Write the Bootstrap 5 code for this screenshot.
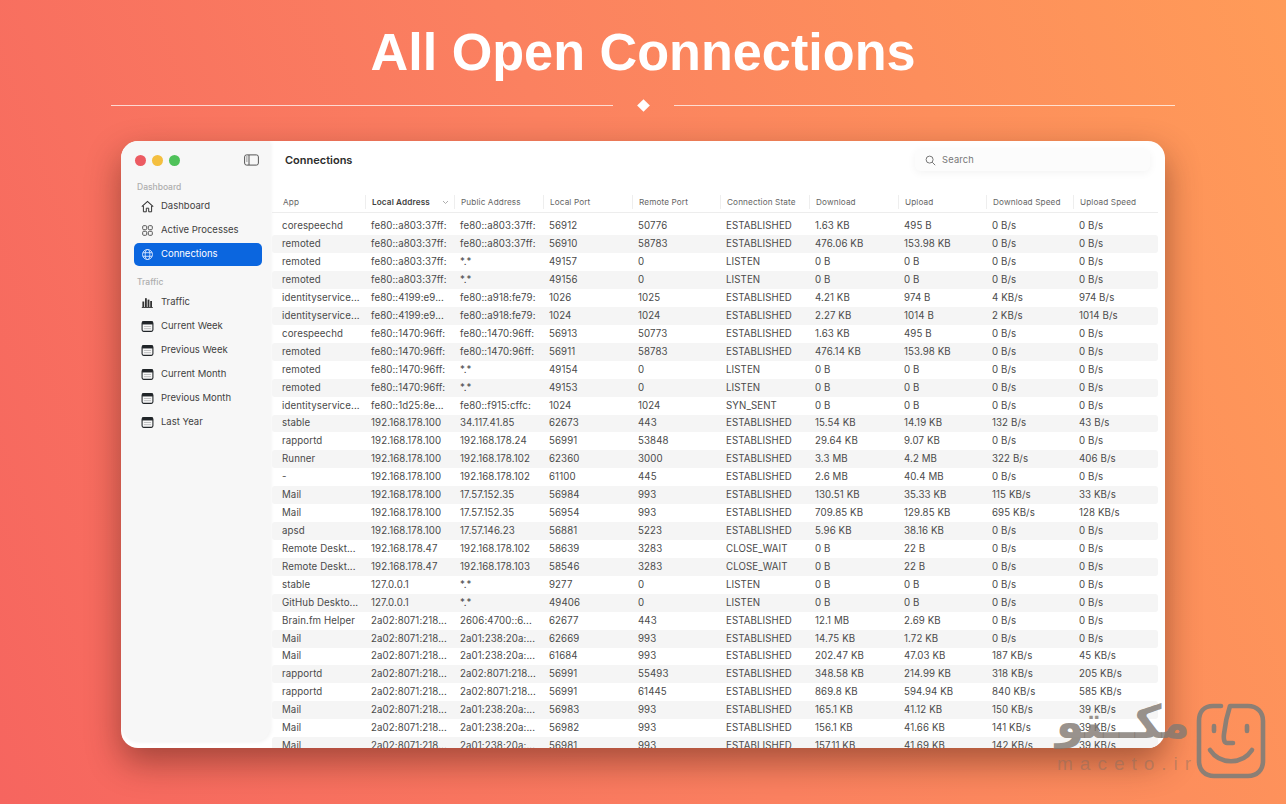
<!DOCTYPE html>
<html lang="en">
<head>
<meta charset="utf-8">
<title>All Open Connections</title>
<link href="https://cdn.jsdelivr.net/npm/bootstrap@5.3.0/dist/css/bootstrap.min.css" rel="stylesheet">
<style>
html,body{height:804px;overflow:hidden}
body{position:relative;background:linear-gradient(70deg,#f6655f 0%,#fb8160 50%,#ff9b58 100%);font-family:Inter,"Liberation Sans",sans-serif;color:#3d3d3d}
.hero-title{font-family:"Liberation Sans",Arial,sans-serif;font-weight:700;font-size:52.2px;line-height:62px;color:#fff;margin:0;padding-top:21px;text-align:center}
.hero-rule{height:12px;margin:16px 111px 0;gap:21px}
.hero-rule i{display:block;flex:1;height:1px;background:rgba(255,255,255,.72)}
.hero-rule b{display:block;width:9px;height:9px;background:#fff;transform:rotate(45deg);margin:0 5px}
.app-win{width:1044px;height:607px;margin:30px auto 0;background:#fff;border-radius:17px;box-shadow:0 14px 34px rgba(60,20,10,.45);overflow:hidden;font-size:10px}
.side-pane{width:149px;height:600px;flex:none;background:#f7f7f7;border-radius:17px 0 14px 17px;padding:0 8px 0 13px;box-shadow:1px 1px 4px rgba(0,0,0,.06)}
.lights{height:38px;gap:6px;padding-left:1px}
.lights span{width:11px;height:11px;border-radius:50%}
.l-r{background:#ec5b62}.l-y{background:#f4bf3f}.l-g{background:#4fc25a}
.toggle-ic{margin-left:auto;margin-right:3px}
.side-label{font-size:8.5px;line-height:12px;color:#aeaeae;font-weight:500;padding-left:3px;margin-top:2px}
.side-label.second{margin-top:9px}
.side-list{margin-top:2px}
.side-list.second{margin-top:3px}
.side-item{height:23px;display:flex;align-items:center;gap:7px;padding-left:7px;border-radius:5px;color:#3f3f3f;font-size:9.5px;margin-bottom:1px}
.side-item svg{flex:none}
.side-item.on{background:#0b66df;color:#fff}
.main-pane{flex:1;min-width:0;height:607px;overflow:hidden;position:relative}
.top-line{height:38px;padding-left:15px;padding-right:15px}
.top-name{font-size:11px;font-weight:600;color:#2c2c2c}
.find-box{width:235px;height:22px;margin-left:auto;background:#fcfcfc;border-radius:6px;box-shadow:0 2px 8px rgba(0,0,0,.05);display:flex;align-items:center;gap:6px;padding-left:10px;color:#777;font-size:9.3px;letter-spacing:.2px}
.conn-cols{display:grid;grid-template-columns:89px 89px 89px 89px 88px 89px 89px 88px 87px 79px;margin:0 7px 0 2px}
.conn-head{margin-top:15px;height:19px;align-items:center;font-size:8.2px;color:#666;border-bottom:1px solid #ededed;padding:0 0 3px 4px;letter-spacing:.12px;grid-template-columns:89px 89px 89px 89px 88px 89px 89px 88px 87px 75px}
.conn-head span{padding-left:6px;border-left:1px solid #eee;line-height:14px;position:relative;white-space:nowrap}
.conn-head span:first-child{border-left:0;padding-left:7px}
.conn-head .sorted{font-weight:600;color:#3f3f3f}
.conn-head .caret-mark{position:absolute;left:76px;top:5px}
.conn-body{padding-top:4.4px}
.conn-row{height:17.93px;align-items:center;border-radius:3px;font-size:9.7px;line-height:12px;color:#4a4a4a;letter-spacing:.1px}
.conn-row:nth-child(even){background:#f5f5f5}
.conn-row span{padding-left:10px;white-space:nowrap}
.wm-face{position:absolute;left:1196px;top:703px}
.wm-fa{position:absolute;right:96px;top:692px;font:700 46px/60px "DejaVu Sans",sans-serif;color:rgba(130,122,115,.82);direction:rtl}
.wm-lat{position:absolute;left:1057px;top:754px;font:400 19px/20px "Liberation Sans",sans-serif;letter-spacing:7px;color:rgba(125,110,100,.42)}
</style>
</head>
<body>
<svg width="0" height="0" class="position-absolute">
<symbol id="i-cal" viewBox="0 0 12 12"><rect x="1" y="1.5" width="10" height="9" rx="1.4" fill="none" stroke="currentColor"/><rect x="1" y="1.5" width="10" height="2.6" fill="currentColor"/><path d="M2.7 6h6.6M2.7 8h6.6" stroke="currentColor" stroke-width=".6" opacity=".4"/></symbol>
</svg>

<h1 class="hero-title">All Open Connections</h1>
<div class="hero-rule d-flex align-items-center"><i></i><b></b><i></i></div>

<div class="app-win d-flex">
  <aside class="side-pane">
    <div class="lights d-flex align-items-center">
      <span class="l-r"></span><span class="l-y"></span><span class="l-g"></span>
      <svg class="toggle-ic" width="15" height="12" viewBox="0 0 15 12"><rect x=".6" y=".9" width="13.8" height="10.2" rx="2" fill="none" stroke="#555" stroke-width="1"/><path d="M5 1v10" stroke="#555"/><path d="M2 3h1.6M2 5h1.6M2 7h1.6" stroke="#555" stroke-width=".7"/></svg>
    </div>
    <div class="side-label">Dashboard</div>
    <div class="side-list d-flex flex-column">
      <div class="side-item"><svg width="13" height="13" viewBox="0 0 13 13"><path d="M.8 6.6 6.5 1.4l5.7 5.2" fill="none" stroke="#333" stroke-width="1.1"/><path d="M2.4 6v5.8h2.9V8.2h2.4v3.6h2.9V6" fill="none" stroke="#333" stroke-width="1"/></svg>Dashboard</div>
      <div class="side-item"><svg width="13" height="13" viewBox="0 0 13 13" fill="none" stroke="#555"><rect x="1.7" y="1.7" width="4" height="4" rx="1"/><rect x="7.3" y="1.7" width="4" height="4" rx="1"/><rect x="1.7" y="7.3" width="4" height="4" rx="1"/><rect x="7.3" y="7.3" width="4" height="4" rx="1"/></svg>Active Processes</div>
      <div class="side-item on"><svg width="13" height="13" viewBox="0 0 13 13" fill="none" stroke="#dce9ff" stroke-width=".9"><circle cx="6.5" cy="6.5" r="5"/><ellipse cx="6.5" cy="6.5" rx="2.3" ry="5"/><path d="M1.9 4.7h9.2M1.9 8.3h9.2"/></svg>Connections</div>
    </div>
    <div class="side-label second">Traffic</div>
    <div class="side-list second d-flex flex-column">
      <div class="side-item"><svg width="13" height="13" viewBox="0 0 13 13" fill="#333"><rect x="1.4" y="5.5" width="1.8" height="5.5"/><rect x="4" y="2.2" width="1.8" height="8.8"/><rect x="6.6" y="3.6" width="1.8" height="7.4"/><rect x="9.2" y="5" width="1.8" height="6"/><rect x=".8" y="11" width="11" height=".9"/></svg>Traffic</div>
      <div class="side-item"><svg width="13" height="13" class="text-dark"><use href="#i-cal"/></svg>Current Week</div>
      <div class="side-item"><svg width="13" height="13" class="text-dark"><use href="#i-cal"/></svg>Previous Week</div>
      <div class="side-item"><svg width="13" height="13" class="text-dark"><use href="#i-cal"/></svg>Current Month</div>
      <div class="side-item"><svg width="13" height="13" class="text-dark"><use href="#i-cal"/></svg>Previous Month</div>
      <div class="side-item"><svg width="13" height="13" class="text-dark"><use href="#i-cal"/></svg>Last Year</div>
    </div>
  </aside>
  <main class="main-pane">
    <div class="top-line d-flex align-items-center">
      <div class="top-name">Connections</div>
      <div class="find-box"><svg width="11" height="11" viewBox="0 0 11 11" fill="none" stroke="#777"><circle cx="4.6" cy="4.6" r="3.5"/><path d="m7.2 7.2 3 3"/></svg>Search</div>
    </div>
    <div class="conn-cols conn-head">
      <span>App</span><span class="sorted">Local Address<svg class="caret-mark" width="7" height="5" viewBox="0 0 7 5" fill="none" stroke="#999" stroke-width=".8"><path d="m1 1 2.5 2.5L6 1"/></svg></span><span>Public Address</span><span>Local Port</span><span>Remote Port</span><span>Connection State</span><span>Download</span><span>Upload</span><span>Download Speed</span><span>Upload Speed</span>
    </div>
    <div class="conn-body">
      <div class="conn-cols conn-row"><span>corespeechd</span><span>fe80::a803:37ff:</span><span>fe80::a803:37ff:</span><span>56912</span><span>50776</span><span>ESTABLISHED</span><span>1.63 KB</span><span>495 B</span><span>0 B/s</span><span>0 B/s</span></div>
      <div class="conn-cols conn-row"><span>remoted</span><span>fe80::a803:37ff:</span><span>fe80::a803:37ff:</span><span>56910</span><span>58783</span><span>ESTABLISHED</span><span>476.06 KB</span><span>153.98 KB</span><span>0 B/s</span><span>0 B/s</span></div>
      <div class="conn-cols conn-row"><span>remoted</span><span>fe80::a803:37ff:</span><span>*.*</span><span>49157</span><span>0</span><span>LISTEN</span><span>0 B</span><span>0 B</span><span>0 B/s</span><span>0 B/s</span></div>
      <div class="conn-cols conn-row"><span>remoted</span><span>fe80::a803:37ff:</span><span>*.*</span><span>49156</span><span>0</span><span>LISTEN</span><span>0 B</span><span>0 B</span><span>0 B/s</span><span>0 B/s</span></div>
      <div class="conn-cols conn-row"><span>identityservice...</span><span>fe80::4199:e9...</span><span>fe80::a918:fe79:</span><span>1026</span><span>1025</span><span>ESTABLISHED</span><span>4.21 KB</span><span>974 B</span><span>4 KB/s</span><span>974 B/s</span></div>
      <div class="conn-cols conn-row"><span>identityservice...</span><span>fe80::4199:e9...</span><span>fe80::a918:fe79:</span><span>1024</span><span>1024</span><span>ESTABLISHED</span><span>2.27 KB</span><span>1014 B</span><span>2 KB/s</span><span>1014 B/s</span></div>
      <div class="conn-cols conn-row"><span>corespeechd</span><span>fe80::1470:96ff:</span><span>fe80::1470:96ff:</span><span>56913</span><span>50773</span><span>ESTABLISHED</span><span>1.63 KB</span><span>495 B</span><span>0 B/s</span><span>0 B/s</span></div>
      <div class="conn-cols conn-row"><span>remoted</span><span>fe80::1470:96ff:</span><span>fe80::1470:96ff:</span><span>56911</span><span>58783</span><span>ESTABLISHED</span><span>476.14 KB</span><span>153.98 KB</span><span>0 B/s</span><span>0 B/s</span></div>
      <div class="conn-cols conn-row"><span>remoted</span><span>fe80::1470:96ff:</span><span>*.*</span><span>49154</span><span>0</span><span>LISTEN</span><span>0 B</span><span>0 B</span><span>0 B/s</span><span>0 B/s</span></div>
      <div class="conn-cols conn-row"><span>remoted</span><span>fe80::1470:96ff:</span><span>*.*</span><span>49153</span><span>0</span><span>LISTEN</span><span>0 B</span><span>0 B</span><span>0 B/s</span><span>0 B/s</span></div>
      <div class="conn-cols conn-row"><span>identityservice...</span><span>fe80::1d25:8e...</span><span>fe80::f915:cffc:</span><span>1024</span><span>1024</span><span>SYN_SENT</span><span>0 B</span><span>0 B</span><span>0 B/s</span><span>0 B/s</span></div>
      <div class="conn-cols conn-row"><span>stable</span><span>192.168.178.100</span><span>34.117.41.85</span><span>62673</span><span>443</span><span>ESTABLISHED</span><span>15.54 KB</span><span>14.19 KB</span><span>132 B/s</span><span>43 B/s</span></div>
      <div class="conn-cols conn-row"><span>rapportd</span><span>192.168.178.100</span><span>192.168.178.24</span><span>56991</span><span>53848</span><span>ESTABLISHED</span><span>29.64 KB</span><span>9.07 KB</span><span>0 B/s</span><span>0 B/s</span></div>
      <div class="conn-cols conn-row"><span>Runner</span><span>192.168.178.100</span><span>192.168.178.102</span><span>62360</span><span>3000</span><span>ESTABLISHED</span><span>3.3 MB</span><span>4.2 MB</span><span>322 B/s</span><span>406 B/s</span></div>
      <div class="conn-cols conn-row"><span>-</span><span>192.168.178.100</span><span>192.168.178.102</span><span>61100</span><span>445</span><span>ESTABLISHED</span><span>2.6 MB</span><span>40.4 MB</span><span>0 B/s</span><span>0 B/s</span></div>
      <div class="conn-cols conn-row"><span>Mail</span><span>192.168.178.100</span><span>17.57.152.35</span><span>56984</span><span>993</span><span>ESTABLISHED</span><span>130.51 KB</span><span>35.33 KB</span><span>115 KB/s</span><span>33 KB/s</span></div>
      <div class="conn-cols conn-row"><span>Mail</span><span>192.168.178.100</span><span>17.57.152.35</span><span>56954</span><span>993</span><span>ESTABLISHED</span><span>709.85 KB</span><span>129.85 KB</span><span>695 KB/s</span><span>128 KB/s</span></div>
      <div class="conn-cols conn-row"><span>apsd</span><span>192.168.178.100</span><span>17.57.146.23</span><span>56881</span><span>5223</span><span>ESTABLISHED</span><span>5.96 KB</span><span>38.16 KB</span><span>0 B/s</span><span>0 B/s</span></div>
      <div class="conn-cols conn-row"><span>Remote Deskt...</span><span>192.168.178.47</span><span>192.168.178.102</span><span>58639</span><span>3283</span><span>CLOSE_WAIT</span><span>0 B</span><span>22 B</span><span>0 B/s</span><span>0 B/s</span></div>
      <div class="conn-cols conn-row"><span>Remote Deskt...</span><span>192.168.178.47</span><span>192.168.178.103</span><span>58546</span><span>3283</span><span>CLOSE_WAIT</span><span>0 B</span><span>22 B</span><span>0 B/s</span><span>0 B/s</span></div>
      <div class="conn-cols conn-row"><span>stable</span><span>127.0.0.1</span><span>*.*</span><span>9277</span><span>0</span><span>LISTEN</span><span>0 B</span><span>0 B</span><span>0 B/s</span><span>0 B/s</span></div>
      <div class="conn-cols conn-row"><span>GitHub Deskto...</span><span>127.0.0.1</span><span>*.*</span><span>49406</span><span>0</span><span>LISTEN</span><span>0 B</span><span>0 B</span><span>0 B/s</span><span>0 B/s</span></div>
      <div class="conn-cols conn-row"><span>Brain.fm Helper</span><span>2a02:8071:218...</span><span>2606:4700::6...</span><span>62677</span><span>443</span><span>ESTABLISHED</span><span>12.1 MB</span><span>2.69 KB</span><span>0 B/s</span><span>0 B/s</span></div>
      <div class="conn-cols conn-row"><span>Mail</span><span>2a02:8071:218...</span><span>2a01:238:20a:...</span><span>62669</span><span>993</span><span>ESTABLISHED</span><span>14.75 KB</span><span>1.72 KB</span><span>0 B/s</span><span>0 B/s</span></div>
      <div class="conn-cols conn-row"><span>Mail</span><span>2a02:8071:218...</span><span>2a01:238:20a:...</span><span>61684</span><span>993</span><span>ESTABLISHED</span><span>202.47 KB</span><span>47.03 KB</span><span>187 KB/s</span><span>45 KB/s</span></div>
      <div class="conn-cols conn-row"><span>rapportd</span><span>2a02:8071:218...</span><span>2a02:8071:218...</span><span>56991</span><span>55493</span><span>ESTABLISHED</span><span>348.58 KB</span><span>214.99 KB</span><span>318 KB/s</span><span>205 KB/s</span></div>
      <div class="conn-cols conn-row"><span>rapportd</span><span>2a02:8071:218...</span><span>2a02:8071:218...</span><span>56991</span><span>61445</span><span>ESTABLISHED</span><span>869.8 KB</span><span>594.94 KB</span><span>840 KB/s</span><span>585 KB/s</span></div>
      <div class="conn-cols conn-row"><span>Mail</span><span>2a02:8071:218...</span><span>2a01:238:20a:...</span><span>56983</span><span>993</span><span>ESTABLISHED</span><span>165.1 KB</span><span>41.12 KB</span><span>150 KB/s</span><span>39 KB/s</span></div>
      <div class="conn-cols conn-row"><span>Mail</span><span>2a02:8071:218...</span><span>2a01:238:20a:...</span><span>56982</span><span>993</span><span>ESTABLISHED</span><span>156.1 KB</span><span>41.66 KB</span><span>141 KB/s</span><span>39 KB/s</span></div>
      <div class="conn-cols conn-row"><span>Mail</span><span>2a02:8071:218...</span><span>2a01:238:20a:...</span><span>56981</span><span>993</span><span>ESTABLISHED</span><span>157.11 KB</span><span>41.69 KB</span><span>142 KB/s</span><span>39 KB/s</span></div>
    </div>
  </main>
</div>

<div class="wm-fa" dir="rtl" lang="fa">مکــتو</div>
<div class="wm-lat">maceto.ir</div>
<svg class="wm-face" width="72" height="76" viewBox="0 0 72 76" fill="none" stroke="#8c7f75" stroke-width="4.6" stroke-linecap="round" stroke-linejoin="round"><path d="M25 3H17C8 3 3 9 3 18V58c0 9 6 15 15 15h34c9 0 15-6 15-15V18C67 9 61 3 52 3H34c-3 9-5 19-6 28-.7 6 .5 9 3 9h6"/><path d="M18 23v5M51 23v5"/><path d="M14 47c10 15 32 15 42 0"/></svg>

<script src="https://cdn.jsdelivr.net/npm/bootstrap@5.3.0/dist/js/bootstrap.bundle.min.js"></script>
</body>
</html>
